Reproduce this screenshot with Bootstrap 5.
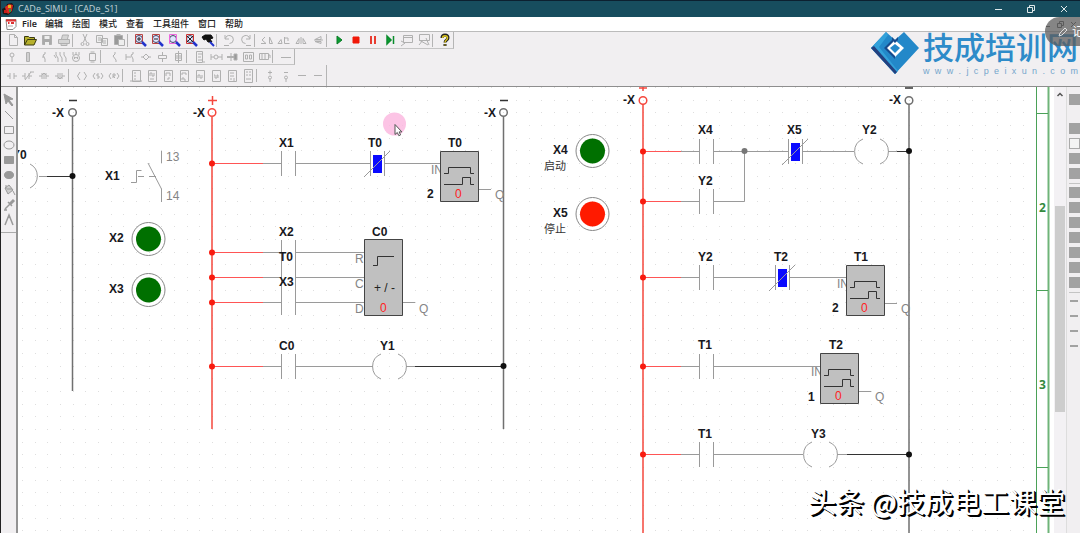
<!DOCTYPE html>
<html lang="zh-CN">
<head>
<meta charset="utf-8">
<meta name="viewport" content="width=device-width, initial-scale=1">
<title>CADe_SIMU - [CADe_S1]</title>
<link href="https://cdn.jsdelivr.net/npm/bootstrap@5.3.0/dist/css/bootstrap.min.css" rel="stylesheet">
<style>
body{font-family:"Open Sans","Noto Sans CJK SC",sans-serif;font-size:9px;line-height:14px;background:#f1eff1;color:#222;border-left:1px solid #222}
button{border:0;background:none;padding:0;color:inherit}
svg{display:block;flex:none}
.titlebar{height:17px;background:#174d5e;border-top:1px solid #0c2030;color:#c4d3d8;padding-left:1px}
.titlebar button{width:33px;height:16px}
.menubar{height:15px;background:#fff;border-bottom:1px solid #bbb;padding-left:4px}
.menubar a{color:#222;text-decoration:none;margin-right:9px;font-weight:500}
.menubar a.en{margin-left:5px;margin-right:8px;font-weight:600}
.menubar button{width:13px;color:#555}
.toolrow{height:17px;padding-left:3px;border-right:1px solid #b5b5b5;border-bottom:1px solid #c4c4c4;color:#b0b0b0;width:max-content}
.toolrow.narrow{height:16px}
.toolrow.tall{height:21px;border-bottom:0}
.toolrow button{width:17px;height:15px}
.toolrow.narrow button,.toolrow.tall button{width:16px}
.toolrow .rule{width:4px;height:13px;border-left:1px solid #b4b4b4}
.toolrow.narrow .rule,.toolrow.tall .rule{width:6px}
.toolrow svg{margin:auto;fill:none;stroke:currentColor}
.bars{border-bottom:1px solid #8e8e8e}
.tools{width:15px;padding-top:5px;color:#999}
.tools button{width:15px;height:15px}
.tools svg{margin:auto;fill:none;stroke:currentColor}
.tools .last{height:6px;border-bottom:1px solid #aaa}
.sheet{background:#fff;border-left:2px solid #929292;overflow:hidden;min-width:0}
.scroll{width:12px;background:#f3f1f4;padding:3px 1px 0}
.thumb{height:206px;margin-top:108px;background:#cdcdcd}
.swatches{width:14px;padding:7px 0 0 2px;border-left:1px solid #ddd}
.swatches button{width:11px;height:11px;margin-bottom:4px;background:#a2a2a2;flex:none}
.swatches .hollow{background:#f4f4f4;border:1px solid #aaa}
.swatches .line{border:solid #f1eff1;border-width:4px 2px 5px 1px}
.swatches .gap14{margin-bottom:18px}
.swatches .cut{border-top:1px solid #c4c4c4;margin-bottom:3px}
.lbl{font:bold 12px "Liberation Sans",sans-serif;fill:#181820}
.pin{font:12px "Liberation Sans",sans-serif;fill:#858585}
.pin.dark{fill:#222}
.num{font:12px "Liberation Sans",sans-serif;fill:#f22}
.cn{font:11px "Noto Sans CJK SC",sans-serif;fill:#333}
.zone{font:bold 12px "Open Sans",sans-serif;fill:#338a3d}
.brand{right:2px;top:26px;color:#2e8bc9}
.brand svg{margin:6px 4px 0 0}
.brandname{font:500 31px/40px "Noto Sans CJK SC",sans-serif;white-space:nowrap}
.site{font:9px/10px "Liberation Sans",sans-serif;color:#75a6cc}
.pill{right:0;top:17px;width:35px;height:29px;border-radius:15px 0 0 15px;background:rgba(92,92,92,.75);color:#fff;font-size:12px;overflow:hidden;padding-left:13px}
.credit{right:15px;bottom:12px;font:28px/40px "Noto Sans CJK SC",sans-serif;color:#fff;text-shadow:1px 1px 0 #000,2px 2px 0 #000;white-space:nowrap}
</style>
</head>
<body class="vh-100 d-flex flex-column overflow-hidden position-relative">
<header class="titlebar d-flex align-items-center flex-shrink-0">
  <svg width="12" height="12" viewBox="0 0 12 12"><path d="M0 6l4-2 1-3 5-1 2 3-2 6-4 3-5-1z" fill="#1b1717"/><path d="M3 4l4-3 4 1-1 6-4 3-2-3z" fill="#d92c22"/><path d="M6 2h3v3H6z" fill="#e9b21c"/><path d="M2 7h3v3H2z" fill="#c51d1d"/><path d="M7 6h2v3H7z" fill="#329a48"/></svg>
  <span class="ms-1 me-auto">CADe_SIMU - [CADe_S1]</span>
  <button aria-label="最小化"><svg class="m-auto" width="8" height="8"><path d="M1 4.500h7" stroke="#dfe8ea"/></svg></button>
  <button aria-label="还原"><svg class="m-auto" width="8" height="8" fill="none" stroke="#dfe8ea"><path d="M.5 2.500h5v5h-5zM2.500 2V.5h5v5H6"/></svg></button>
  <button aria-label="关闭"><svg class="m-auto" width="8" height="8"><path d="M1 1l6 6M7 1L1 7" stroke="#dfe8ea"/></svg></button>
</header>
<nav class="menubar d-flex align-items-center flex-shrink-0">
  <svg width="12" height="12" viewBox="0 0 12 12"><path d="M1 1.500h10v7l-3 3H2z" fill="#fff" stroke="#888"/><path d="M1 2.500h10M3 5h1.500M6 5h3" stroke="#d33" stroke-width="2"/><path d="M3 8h5" stroke="#aaa"/></svg>
  <a class="en" href="#">File</a><a href="#">编辑</a><a href="#">绘图</a><a href="#">模式</a><a href="#">查看</a><a href="#">工具组件</a><a href="#">窗口</a><a href="#">帮助</a>
  <button class="ms-auto" aria-label="最小化图纸"><svg class="m-auto" width="7" height="7"><path d="M2 5.500h4" stroke="currentColor"/></svg></button>
  <button aria-label="还原图纸"><svg class="m-auto" width="7" height="7" fill="none" stroke="currentColor"><path d="M.5 2.500h4v4h-4zM2.500 2V.5h4v4H5"/></svg></button>
  <button aria-label="关闭图纸"><svg class="m-auto" width="7" height="7"><path d="M1 1l5 5M6 1L1 6" stroke="currentColor"/></svg></button>
</nav>
<div class="bars flex-shrink-0">
  <div class="toolrow d-flex align-items-center" id="row1"></div>
  <div class="toolrow narrow d-flex align-items-center" id="row2"></div>
  <div class="toolrow tall d-flex align-items-center" id="row3"></div>
</div>
<main class="d-flex flex-grow-1 overflow-hidden">
  <aside class="tools flex-shrink-0 d-flex flex-column" id="tools"></aside>
  <section class="sheet flex-grow-1">
    <svg width="1035" height="446" viewBox="18 87 1035 446" fill="none" stroke="#9a9a9a">
      <defs>
        <pattern id="dots" x="22" y="87" width="38" height="38" patternUnits="userSpaceOnUse"><path stroke="none" fill="#dedede" d="M0 0h1v1H0zM13 0h1v1h-1zM25 0h1v1h-1zM0 13h1v1H0zM13 13h1v1h-1zM25 13h1v1h-1zM0 25h1v1H0zM13 25h1v1h-1zM25 25h1v1h-1z"/></pattern>
        <g id="no"><path d="M.5-12v25M14.500-12v25"/></g>
        <g id="nc"><path d="M.5-12v25M14.500-12v25"/><path d="M3-8h9v18H3z" fill="#0a0aff" stroke="none"/><path d="M-6 14L20-12"/></g>
        <g id="coil"><path d="M-8-12a13.500 13.500 0 0 0 0 25M9-12a13.500 13.500 0 0 1 0 25"/></g>
        <g id="timer"><text class="pin" x="-9" y="23" stroke="none">IN</text><path d="M.5.5h38v50H.5z" fill="#c0c0c0" stroke="#444"/><path d="M4 22.500h4.500v-6h22v6H34M4 33.500h18.500v-7h8v7H34" stroke="#333"/><path d="M39 38.500h12"/><text class="num" x="15" y="47" stroke="none">0</text><text class="pin" x="55" y="48" stroke="none">Q</text></g>
        <g id="lamp"><circle r="16.500" stroke="#888"/><circle r="12.500" stroke="none" fill="currentColor"/></g>
        <g id="tap"><path d="M0 .5h51" stroke="#f55"/><circle r="3" cy=".5" fill="#f81c10" stroke="none"/></g>
      </defs>
      <path d="M18 87h1017v446H18z" fill="url(#dots)" stroke="none"/>
      <g stroke="#4ba158"><path d="M1036.500 87v446M1036 113.500h12M1036 290.500h12M1036 467.500h12"/><path d="M1048.500 87v446" stroke-width="2" opacity=".8"/></g>
      <!-- supply rails -->
      <g stroke="#707070" stroke-width="1.500"><path d="M72.500 117v274M503.500 117v312M909 104v429"/><path d="M69 100.500h8M500 100.500h8M905 88h8" stroke="#333"/><circle cx="72.500" cy="112.500" r="3.800"/><circle cx="503.500" cy="112.500" r="3.800"/><circle cx="909" cy="100.500" r="3.800"/></g>
      <g stroke="#f5483e" stroke-width="1.500"><path d="M212 117v312M643 104v429M208 100.500h9M212.500 96v9M639 88h8M643 87v4"/><circle cx="212" cy="112.500" r="3.800"/><circle cx="643" cy="100.500" r="3.800"/></g>
      <!-- wires -->
      <path d="M263 163.500h18M296 163.500h74M385 163.500h55M263 252.500h18M296 252.500h68M263 277.500h18M296 277.500h68M263 302.500h18M296 302.500h68M403 302.500h12M263 366.500h18M296 366.500h77M406 366.500h9"/>
      <path d="M680 151.500h19M714 151.500h74M803 151.500h51M888 151.500h9M694 201.500h5M714 201.500h30.500v-50M694 277.500h5M714 277.500h61M790 277.500h56M694 366.500h5M714 366.500h107M694 454.500h5M714 454.500h89M837 454.500h10M39 176.500h8"/>
      <path d="M415 366.500h88M847 454.500h62M897 151.500h12M47 176.500h26" stroke="#333"/>
      <g fill="#111" stroke="none"><circle cx="72.500" cy="176" r="3"/><circle cx="503.500" cy="366" r="3"/><circle cx="909" cy="151" r="3"/><circle cx="909" cy="454.500" r="3"/><circle cx="744.500" cy="151" r="3" fill="#777"/></g>
      <use href="#tap" x="212" y="163"/><use href="#tap" x="212" y="252"/><use href="#tap" x="212" y="277"/><use href="#tap" x="212" y="302"/><use href="#tap" x="212" y="366"/>
      <use href="#tap" x="643" y="151"/><use href="#tap" x="643" y="201"/><use href="#tap" x="643" y="277"/><use href="#tap" x="643" y="366"/><use href="#tap" x="643" y="454"/>
      <path d="M681 201.500h18M681 151.500h18M681 277.500h18M681 366.500h18M681 454.500h18"/>
      <!-- contacts and coils -->
      <use href="#no" x="281" y="163"/><use href="#no" x="281" y="252"/><use href="#no" x="281" y="277"/><use href="#no" x="281" y="302"/><use href="#no" x="281" y="366"/>
      <use href="#no" x="699" y="151"/><use href="#no" x="699" y="201"/><use href="#no" x="699" y="277"/><use href="#no" x="699" y="366"/><use href="#no" x="699" y="454"/>
      <use href="#nc" x="370" y="163"/><use href="#nc" x="788" y="151"/><use href="#nc" x="775" y="277"/>
      <use href="#coil" x="389" y="366"/><use href="#coil" x="871" y="151"/><use href="#coil" x="820" y="454"/>
      <path d="M30 164a13.500 13.500 0 0 1 0 24"/>
      <!-- function blocks -->
      <use href="#timer" x="440" y="151"/><use href="#timer" x="846" y="265"/><use href="#timer" x="820" y="353"/>
      <path d="M364.500 239.500h38v76h-38z" fill="#c0c0c0" stroke="#444"/><path d="M373 265.500h4.500v-9H394" stroke="#333"/>
      <!-- hand switch and lamps -->
      <path d="M131 182.500h5.500v-12h5M138 176.500h6M149 176.500h7M148 163l13.500 26v13M161.500 151v12"/>
      <g color="#007000"><use href="#lamp" x="148.500" y="239"/><use href="#lamp" x="148.500" y="290"/><use href="#lamp" x="592.500" y="151"/></g>
      <g color="#ff1a00"><use href="#lamp" x="592.500" y="214"/></g>
      <g stroke="none">
        <g class="lbl"><text x="12" y="159">Y0</text><text x="52" y="117">-X</text><text x="193" y="117">-X</text><text x="484" y="117">-X</text><text x="623" y="104">-X</text><text x="889" y="104">-X</text>
        <text x="105" y="180">X1</text><text x="109" y="242">X2</text><text x="109" y="293">X3</text><text x="279" y="147">X1</text><text x="368" y="147">T0</text><text x="448" y="147">T0</text><text x="279" y="236">X2</text><text x="279" y="261">T0</text><text x="279" y="286">X3</text><text x="372" y="236">C0</text><text x="279" y="350">C0</text><text x="380" y="350">Y1</text>
        <text x="427" y="198">2</text><text x="832" y="312">2</text><text x="808" y="401">1</text>
        <text x="553" y="154">X4</text><text x="553" y="217">X5</text><text x="698" y="134">X4</text><text x="698" y="185">Y2</text><text x="787" y="134">X5</text><text x="862" y="134">Y2</text><text x="698" y="261">Y2</text><text x="774" y="261">T2</text><text x="854" y="261">T1</text><text x="698" y="349">T1</text><text x="829" y="349">T2</text><text x="698" y="438">T1</text><text x="811" y="438">Y3</text></g>
        <g class="pin"><text x="166" y="161">13</text><text x="166" y="200">14</text><text x="355" y="263">R</text><text x="355" y="288">C</text><text x="355" y="313">D</text><text x="419" y="313">Q</text></g>
        <text class="pin dark" x="374" y="292">+ / -</text><text class="num" x="380" y="312">0</text>
        <g class="cn"><text x="544" y="170">启动</text><text x="544" y="233">停止</text></g>
        <g class="zone"><text x="1039" y="212">2</text><text x="1039" y="389">3</text></g>
        <circle cx="394.500" cy="124" r="11.500" fill="#fbb5df" opacity=".8"/>
      </g>
      <path d="M395 124.500v10l2.300-2 1.500 3.200 1.800-.8-1.500-3h2.800z" fill="#fff" stroke="#555"/>
    </svg>
  </section>
  <div class="scroll flex-shrink-0"><svg width="10" height="8" fill="none" stroke="#555" stroke-width="1.500"><path d="M2.500 6L5 3.500 7.500 6"/></svg><div class="thumb"></div></div>
  <aside class="swatches flex-shrink-0 d-flex flex-column" id="swatches"></aside>
</main>
<div class="brand position-absolute d-flex">
  <svg width="48" height="44" viewBox="0 0 48 44"><path d="M0 16L15 0l9 8L33 0l15 16-24 26z" fill="#2388c9"/><path d="M0 16l24 26 3-3L8 15l9-12-2-3z" fill="#32a1da"/><path d="M0 16l24 26 2-2L3 14z" fill="#24407f"/><path d="M24 8l9 8-9 9-9-9z" fill="#fff"/><path d="M21 5l3 3 3-3v3l-3 3-3-3zM16 16l8 8v3L13 16l9-9v3z" fill="#174b8d"/><path d="M24 12l5 4-5 5-5-5z" fill="#2388c9"/></svg>
  <div><div class="brandname">技成培训网</div>
  <div class="site d-flex justify-content-between"><span>w</span><span>w</span><span>w</span><span>.</span><span>j</span><span>c</span><span>p</span><span>e</span><span>i</span><span>x</span><span>u</span><span>n</span><span>.</span><span>c</span><span>o</span><span>m</span></div></div>
</div>
<div class="pill position-absolute d-flex align-items-center"><svg class="me-1" width="10" height="10" fill="none" stroke="#ddd"><path d="M1 9l1-3 5-5 2 2-5 5z"/></svg><span>记</span></div>
<div class="credit position-absolute">头条 @技成电工课堂</div>
<script src="https://cdn.jsdelivr.net/npm/bootstrap@5.3.0/dist/js/bootstrap.bundle.min.js"></script>
<script>
// Magnifier: tinted lens with a blue handle and a mark inside
const lens = (tint, mark) => `<circle cx="6" cy="6" r="3.500" stroke="#446" fill="#dfe6ff"/><path d="M2.500 1.500h7v9h-7z" stroke="${tint}"/><path d="M9 9l4 4" stroke="#2233cc" stroke-width="2.500"/><path d="${mark}" stroke="#222"/>`;
const p = (d, extra = '') => `<path d="${d}" ${extra}/>`;
const box = 'M3.500 1.500h8v11h-8z';
const rows = {
  row1: [
    ['新建', p('M3.500 1.500h5l3 3v8h-8zM8.500 1.500v3h3')],
    ['打开', p('M1.500 12V3.500h4l1 1h5v2M1.500 12l3-5.500h9L11 12z', 'fill="#b6b02c" stroke="#3b3b12"')],
    ['保存', p('M2.500 2.500h9v9h-9z', 'fill="#aaa"') + p('M4.500 3h5v3h-5zM5 9h4v3H5z', 'fill="#eee" stroke="none"')],
    ['打印', p('M4.500 6l1-4h6l-1 4M1.500 6.500h11v4h-11zM4 10.500h6v2H4z', 'fill="#d5d5d5"')], 0,
    ['剪切', p('M5 1l3.500 8M9 1L5.500 9') + '<circle cx="4.500" cy="11" r="1.500"/><circle cx="9.500" cy="11" r="1.500"/>'],
    ['复制', p('M1.500 2.500h6v7h-6zM6.500 5.500h6v7h-6zM3 5h3M3 7h3M8 8h3M8 10h3', 'fill="#eee"')],
    ['粘贴', p('M2.500 2.500h8v9h-8z', 'fill="#999"') + p('M6.500 6.500h6v6h-6zM4.500 1.500h4', 'fill="#eee"')], 0,
    ['放大', lens('#b44', 'M4 6h4M6 4v4')], ['缩小', lens('#b44', 'M4 6h4')], ['窗口缩放', lens('#e6d', 'M0 0')], ['全图', lens('#c33', 'M3 3l6 6M9 3L3 9')],
    ['平移', p('M1 4l3-2h6l2 3-3 1 2 3H7L5 6l-2 1z', 'fill="#111" stroke="#111"') + p('M9 9l4 4', 'stroke="#23c" stroke-width="2"')], 0,
    ['撤消', p('M3 2v4h4M3.500 5.500a4 4 0 1 1 4 5M2 12.500h5')], ['重做', p('M11 2v4H7M10.500 5.500a4 4 0 1 0-4 5M7 12.500h5')], 0,
    ['左转', p('M1 10.500h5L2 7l3-3M9.500 4v6.500h3z')], ['右转', p('M1 10.500h4l-1-4zM7.500 4v6.500h5M7 5h4v3')], ['镜像', p('M2 10.500l3-5v5zM7 4v7M9 5.500v5h3z')], ['翻转', p('M10 3.500L4 6.500h6zM4 8.500h6v2zM3 7h9')], 0,
    ['运行', p('M5 3l5 4-5 4z', 'fill="#0a9c32" stroke="#0a7c26"')], ['停止', p('M4 4h6v6H4z', 'fill="#f01808" stroke="#f01808"')], ['暂停', p('M5 3v8M9 3v8', 'stroke="#e83c30" stroke-width="2"')], ['单步', p('M4 3l4 4-4 4zM10.500 3v8', 'fill="#0a9c32" stroke="#0a8c2c" stroke-width="1.500"')],
    ['窗口', p('M3.500 2.500h9v7h-9zM3 4.500h9M1 8l4 2-4 3')], ['网络', p('M2.500 1.500h10v6h-10zM2 7l9 5M2 12l4-5M9 5l3 7')], 0,
    ['帮助', p('M4 5c0-4 6-4 6 0 0 2-3 2-3 4.500M7 11v2', 'stroke="#222" stroke-width="3"') + p('M4.500 5c0-3 5-3 5 0 0 2-2.500 2-2.500 4.500M7 11.500v1', 'stroke="#d8c11c" stroke-width="1.500"')]
  ],
  row2: [
    ['电源', '<circle cx="7" cy="5" r="2"/>' + p('M7 7v5')], ['熔断器', p('M5.500 2.500h3v9h-3zM7 3v8')], ['断路器', p('M8 2v2L6 5l2 4v3M5 7h2')], ['三极开关', p('M3 2v3l2 3v4M7 2v3l2 3v4M11 2v3l2 3v4M1 5l2 3')], ['电动机', '<circle cx="7" cy="8" r="3.500"/>' + p('M4 2v3M7 2v3M10 2v3M5.500 9V7L7 8l1.500-1v2')], ['变压器', p('M4.500 3.500h6v7h-6zM5.500 2h4M5.500 12h4')], 0,
    ['触点', p('M8 2v2L6 6l3 4v2')], ['按钮', p('M10 2v2L8 5l2 4v3M3 4v6M3 7h5')], ['指示灯', p('M7 4l3 3-3 3-3-3zM2 7h2M10 7h2')], ['线圈', p('M3.500 5.500h8v3h-8zM7.500 2v3M7.500 9v3')], ['继电器', p('M4.500 3.500h6v7h-6zM7.500 1v12M5 6h5M5 8h5')], 0,
    ['控制器', p('M3.500 1.500h6v11h-6zM5 4h4M5 7h3M5 10h4M10 12h2')], ['传感器', p('M2 4v6M2 7h3M9 7h4M13 4v6') + '<circle cx="7" cy="7" r="2"/>'], ['接头', p('M2 7h10', 'stroke-width="2"') + p('M6 3v8M9 4h3v6H9z', 'fill="#999"')], ['显示', p('M2.500 2.500h10v9h-10zM4.500 5v4h2V5zM8.500 5v4h2V5z')], ['模块', p('M2.500 3.500h9v6h-9zM5 4v5M8 4v5M11 5h2v3')], 0, ['导线', p('M2 7.500h10')]
  ],
  row3: [
    ['常开触点', p('M2 7h3M5 4v6M9 4v6M9 7h3')], ['常闭触点', p('M1 7h3M4 4v6M8 4v6M8 7h3M4 11l6-8M9 3h4')], ['上升沿', p('M2 7h3M5 4v6M9 4v6M9 7h3M7 10V4L5 6M7 4l2 2')], ['下降沿', p('M2 7h3M5 4v6M9 4v6M9 7h3M7 4v6L5 8M7 10l2-2')], 0,
    ['输出', p('M5 3L2.500 7 5 11M9 3l2.500 4L9 11')], ['置位', p('M4 4L2 7l2 3M10 4l2 3-2 3M8 5H6v2h2v2H6')], ['复位', p('M4 4L2 7l2 3M10 4l2 3-2 3M6 9V5h2v2H6l2 2')], 0,
    ['功能块', p(box + 'M5 4h2M5 7h2M5 10h2M1 12h12')], ['接通延时', p(box + 'M5 7V4h2v3h2V4M5 10h4')], ['断开延时', p(box + 'M5 7V4h4v3M7 11V9h2')], ['脉冲', p(box + 'M5 6V4h4v2M5 11V9h2v2h2')], ['闪烁', p(box + 'M5 9V6h2v3h2V6')], ['计数器', p(box + 'M5 6h1v3h2V6h1v3')], ['比较', p(box + 'M5 4h4M5 7h4M5 10h2M9 9v3')], ['运算', p('M3.500.5h8v13h-8zM5 3h2M8 3h2M5 6h2M8 6h2M5 10h5')], 0,
    ['正极', '<circle cx="7" cy="8.500" r="1.500"/>' + p('M7 10v3M5 3.500h4M7 1.500v4')], ['负极', '<circle cx="7" cy="8.500" r="1.500"/>' + p('M7 10v3M5 3.500h4')], ['横线', p('M3 6.500h8')], ['连线', p('M3 6.500h8')]
  ]
};
for (const [id, items] of Object.entries(rows))
  document.getElementById(id).innerHTML = items.map(i => i ? `<button aria-label="${i[0]}"><svg width="14" height="14">${i[1]}</svg></button>` : '<span class="rule"></span>').join('');

const tools = [
  ['选择', p('M2 1l9 5-4 1 4 5-1 1-4-5-2 3z', 'fill="#999"')], ['直线', p('M3 3l8 8')], ['矩形', p('M2.500 3.500h9v7h-9z')], ['椭圆', '<ellipse cx="7" cy="7" rx="5" ry="4"/>'],
  ['实心矩形', p('M2.500 3.500h9v7h-9z', 'fill="#999"')], ['实心椭圆', '<ellipse cx="7" cy="7" rx="4.500" ry="3.500" fill="#999"/>'], ['填充', p('M3 5l4-3 4 5-5 4zM5 6h5M11 8l2 4M4 2v4', 'fill="#ccc"')], ['画笔', p('M2 12h3M3 11l5-5M6 4l4 4', 'stroke-width="1.500"') + p('M8 6l4-4', 'stroke-width="3"')], ['文字', p('M3 12L7 2l4 10M7 2v3', 'stroke-width="1.500"')]
];
document.getElementById('tools').innerHTML = tools.map(t => `<button aria-label="${t[0]}"><svg width="14" height="14">${t[1]}</svg></button>`).join('') + '<span class="last"></span>';

const kinds = ['gap14', '', 'hollow', '', '', 'cut', '', '', '', '', '', '', '', 'cut', 'line', 'line', 'line', 'line'];
document.getElementById('swatches').innerHTML = kinds.map((k, n) => k === 'cut' ? '<span class="cut"></span>' : `<button class="${k}" aria-label="样式 ${n + 1}"></button>`).join('');
</script>
</body>
</html>
